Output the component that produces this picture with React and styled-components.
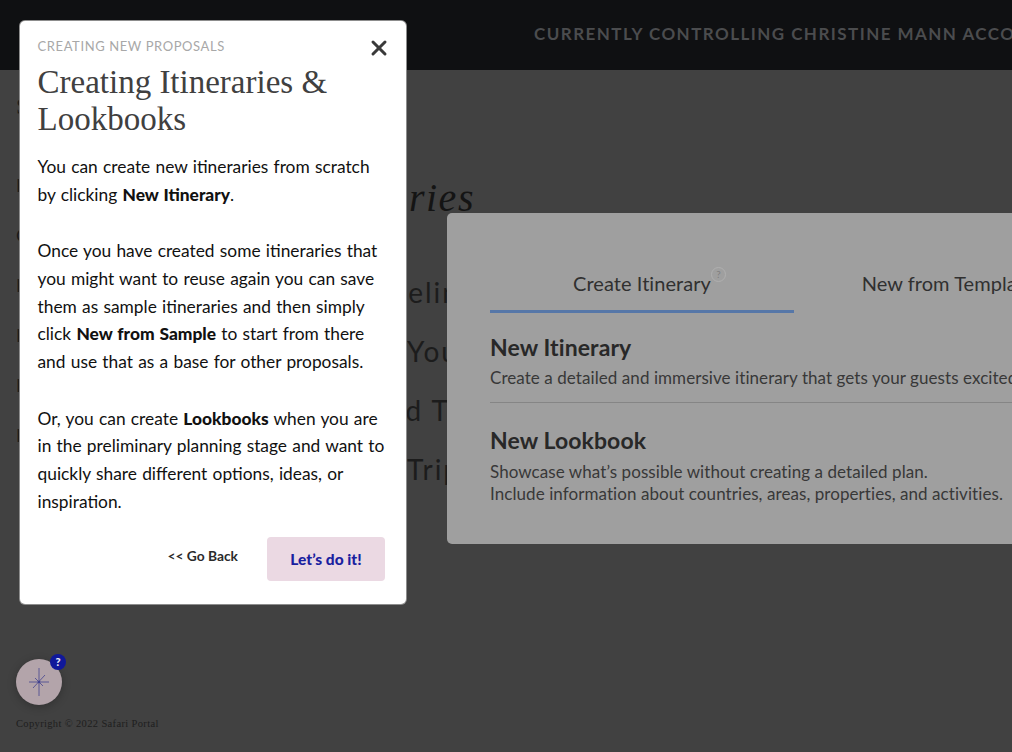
import React from 'react'
import styled, { createGlobalStyle } from 'styled-components'
import { X } from 'lucide-react'

const sans = `Lato, "Liberation Sans", sans-serif`
const serif = `"Liberation Serif", serif`

const GlobalStyle = createGlobalStyle`
  html, body { margin: 0; padding: 0; height: 100%; }
  body { font-family: ${sans}; background: #414141; overflow: hidden; }
`

const Page = styled.div`
  position: relative;
  width: 1012px;
  height: 752px;
  display: flex;
  flex-direction: column;
  overflow: hidden;
`

const TopBar = styled.header`
  flex: 0 0 70px;
  height: 70px;
  background: #0f1012;
  display: flex;
  align-items: center;
  padding-left: 534px;
  white-space: nowrap;
  color: #4b4c4e;
  font-size: 17px;
  font-weight: 700;
  letter-spacing: 1.45px;
  padding-bottom: 4px;
  box-sizing: border-box;
`

const Body = styled.div`
  flex: 1;
  display: flex;
  min-height: 0;
`

const SideBar = styled.aside`
  flex: 0 0 224px;
  box-sizing: border-box;
  padding: 22px 0 21px 16px;
  display: flex;
  flex-direction: column;
  color: #1a1a1a;
`

const SideTitle = styled.div`
  font-family: ${serif};
  font-size: 24px;
  line-height: 28px;
  margin-bottom: 40px;
`

const SideItem = styled.div`
  font-size: 18px;
  line-height: 50px;
  height: 50px;
`

const SideFooter = styled.div`
  margin-top: auto;
`

const HelpFab = styled.div`
  position: relative;
  width: 46px;
  height: 46px;
  border-radius: 50%;
  background: #b3a4aa;
  display: flex;
  align-items: center;
  justify-content: center;
  box-shadow: 0 2px 8px rgba(0, 0, 0, 0.25);
`

const FabBadge = styled.span`
  position: absolute;
  top: -5px;
  right: -4px;
  width: 16px;
  height: 16px;
  border-radius: 50%;
  background: #10189a;
  color: #e8e8f4;
  font-size: 11px;
  font-weight: 900;
  line-height: 16px;
  text-align: center;
`

const Copyright = styled.div`
  margin-top: 12px;
  font-family: ${serif};
  font-size: 10.5px;
  line-height: 14px;
  letter-spacing: 0.35px;
  color: #1e1e1e;
  white-space: nowrap;
`

const Content = styled.main`
  flex: 1;
  min-width: 0;
  padding-top: 104px;
`

const PageTitle = styled.h1`
  margin: 0;
  height: 39px;
  font-family: ${serif};
  font-style: italic;
  font-weight: 400;
  font-size: 40px;
  line-height: 48px;
  letter-spacing: 1.5px;
  color: #141414;
  white-space: nowrap;
`

const Columns = styled.div`
  display: flex;
`

const StepList = styled.div`
  flex: 0 0 223px;
  overflow: hidden;
  padding-top: 59px;
`

const Step = styled.div`
  height: 59px;
  font-size: 28px;
  line-height: 40px;
  letter-spacing: 2px;
  color: #1c1c1c;
  white-space: nowrap;
  padding-left: ${p => p.$indent}px;
`

const ChoicePanel = styled.section`
  flex: 0 0 640px;
  box-sizing: border-box;
  height: 331px;
  background: #9f9f9f;
  border-radius: 5px;
  padding: 48px 0 0 43px;
  white-space: nowrap;
`

const Tabs = styled.div`
  display: flex;
  gap: 2px;
`

const Tab = styled.div`
  flex: 0 0 304px;
  height: 52px;
  box-sizing: border-box;
  text-align: center;
  font-size: 20px;
  line-height: 44px;
  letter-spacing: 0.05px;
  color: #303030;
  border-bottom: ${p => (p.$active ? '3px solid #5677a8' : '3px solid transparent')};
`

const TabLabel = styled.span`
  position: relative;
`

const TabHint = styled.span`
  position: absolute;
  left: 100%;
  top: -4px;
  width: 15px;
  height: 15px;
  border-radius: 50%;
  border: 1px solid #b0b0b0;
  box-sizing: border-box;
  font-size: 10px;
  line-height: 13px;
  letter-spacing: 0;
  color: #808080;
`

const Choice = styled.div`
  padding-top: ${p => (p.$first ? '19px' : '22px')};
  padding-bottom: 13px;
  border-bottom: ${p => (p.$first ? '1px solid #858585' : 'none')};
`

const ChoiceTitle = styled.div`
  font-size: 23px;
  line-height: 30px;
  font-weight: 700;
  letter-spacing: 0.1px;
  color: #282828;
`

const ChoiceText = styled.div`
  font-size: 17px;
  line-height: 22px;
  letter-spacing: 0.07px;
  color: #383838;
  margin-top: ${p => (p.$first ? '5px' : '6px')};
`

const Modal = styled.div`
  position: absolute;
  left: 20px;
  top: 21px;
  width: 386px;
  height: 583px;
  box-sizing: border-box;
  padding: 16px 21px 0 17.5px;
  background: #fff;
  border-radius: 5px;
  box-shadow: 0 0 0 1px #8d8d8d;
`

const CloseButton = styled.button`
  position: absolute;
  top: 15px;
  right: 15px;
  width: 24px;
  height: 24px;
  padding: 0;
  border: 0;
  background: none;
  color: #3a3a3a;
  display: flex;
  align-items: center;
  justify-content: center;
`

const Eyebrow = styled.div`
  font-size: 13px;
  line-height: 18px;
  letter-spacing: 0.6px;
  color: #a8a8a8;
`

const ModalTitle = styled.h2`
  margin: 9px 0 0;
  font-family: ${serif};
  font-weight: 400;
  font-size: 33px;
  line-height: 37px;
  color: #404040;
`

const ModalText = styled.p`
  margin: ${p => (p.$first ? '15px' : '28.5px')} 0 0;
  font-size: 17.35px;
  word-spacing: 0.8px;
  line-height: 27.8px;
  color: #111;

  b {
    font-weight: 900;
  }
`

const ModalActions = styled.div`
  margin-top: 21px;
  display: flex;
  justify-content: flex-end;
  align-items: center;
  gap: 29px;
`

const BackLink = styled.span`
  font-size: 13.8px;
  font-weight: 700;
  color: #2b2b2b;
  margin-top: -6px;
`

const PrimaryButton = styled.button`
  width: 118px;
  height: 44px;
  border: 0;
  border-radius: 4px;
  background: #ebd9e3;
  color: #1a1fa0;
  font-family: ${sans};
  font-size: 15.5px;
  font-weight: 900;
`

const StarIcon = () => (
  <svg width="24" height="30" viewBox="0 0 24 30" fill="none" stroke="#45458f" strokeWidth="0.8">
    <path d="M12 1v28M2 15h20M6 21l12-13M8 11l8 8" />
    <circle cx="12" cy="15" r="1" fill="#35358f" />
  </svg>
)

export default function App() {
  return (
    <Page>
      <GlobalStyle />
      <TopBar>CURRENTLY CONTROLLING CHRISTINE MANN ACCOUNT</TopBar>
      <Body>
        <SideBar>
          <SideTitle>Safari Portal</SideTitle>
          <SideItem>Home</SideItem>
          <SideItem>Contacts</SideItem>
          <SideItem>Hotels</SideItem>
          <SideItem>Itineraries</SideItem>
          <SideItem>Library</SideItem>
          <SideItem>Library</SideItem>
          <SideFooter>
            <HelpFab>
              <StarIcon />
              <FabBadge>?</FabBadge>
            </HelpFab>
            <Copyright>Copyright © 2022 Safari Portal</Copyright>
          </SideFooter>
        </SideBar>
        <Content>
          <PageTitle>My Itineraries</PageTitle>
          <Columns>
            <StepList>
              <Step $indent={118}>Guidelines</Step>
              <Step $indent={183}>Your</Step>
              <Step $indent={130}>Send To</Step>
              <Step $indent={183}>Trips</Step>
            </StepList>
            <ChoicePanel>
              <Tabs>
                <Tab $active>
                  <TabLabel>
                    Create Itinerary<TabHint>?</TabHint>
                  </TabLabel>
                </Tab>
                <Tab>New from Template</Tab>
              </Tabs>
              <Choice $first>
                <ChoiceTitle>New Itinerary</ChoiceTitle>
                <ChoiceText $first>Create a detailed and immersive itinerary that gets your guests excited about their trip.</ChoiceText>
              </Choice>
              <Choice>
                <ChoiceTitle>New Lookbook</ChoiceTitle>
                <ChoiceText>
                  Showcase what’s possible without creating a detailed plan.
                  <br />
                  Include information about countries, areas, properties, and activities.
                </ChoiceText>
              </Choice>
            </ChoicePanel>
          </Columns>
        </Content>
      </Body>

      <Modal>
        <CloseButton aria-label="Close">
          <X size={26} strokeWidth={3} />
        </CloseButton>
        <Eyebrow>CREATING NEW PROPOSALS</Eyebrow>
        <ModalTitle>Creating Itineraries &amp; Lookbooks</ModalTitle>
        <ModalText $first>
          You can create new itineraries from scratch by clicking <b>New Itinerary</b>.
        </ModalText>
        <ModalText>
          Once you have created some itineraries that you might want to reuse again you can save them as sample itineraries and then simply click <b>New from Sample</b> to start from there and use that as a base for other proposals.
        </ModalText>
        <ModalText>
          Or, you can create <b>Lookbooks</b> when you are in the preliminary planning stage and want to quickly share different options, ideas, or inspiration.
        </ModalText>
        <ModalActions>
          <BackLink>&lt;&lt; Go Back</BackLink>
          <PrimaryButton>Let’s do it!</PrimaryButton>
        </ModalActions>
      </Modal>
    </Page>
  )
}
